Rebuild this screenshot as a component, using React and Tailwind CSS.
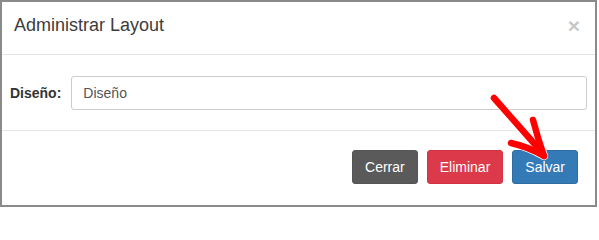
import React from 'react';

function Arrow() {
  return (
    <svg
      className="pointer-events-none absolute left-0 top-0"
      width="599"
      height="210"
      viewBox="0 0 599 210"
      fill="none"
    >
      <g stroke="#ffffff" strokeWidth="8" strokeLinecap="round" strokeLinejoin="round">
        <path d="M494 98 L539 149" />
        <path d="M511 143 Q529 147 544 156" />
        <path d="M533 120 Q538 139 544 156" />
      </g>
      <g stroke="#ff0000" strokeWidth="6.5" strokeLinecap="round" strokeLinejoin="round">
        <path d="M494 98 L539 149" />
        <path d="M511 143 Q529 147 544 156" />
        <path d="M533 120 Q538 139 544 156" />
      </g>
    </svg>
  );
}

export default function App() {
  return (
    <div className="relative h-[210px] w-[599px] bg-white font-['Liberation_Sans',Arial,sans-serif]">
      <div className="flex h-[207px] w-[597px] flex-col border-2 border-[#8a8a8a] bg-white">
        {/* header */}
        <div className="flex h-[53px] items-start justify-between border-b border-[#e5e5e5] pl-[12px] pr-[15px] pt-[11px]">
          <h4 className="text-[18px] leading-[25.7px] text-[#3c3c3c]">Administrar Layout</h4>
          <span className="mt-[2px] text-[21px] font-bold leading-[21px] text-[#c8c8c8]">×</span>
        </div>

        {/* body */}
        <div className="flex h-[75px] items-start gap-[10px] pl-[8px] pr-[8px] pt-[21px]">
          <label className="flex h-[34px] items-center text-[14px] font-bold text-[#333]">Diseño:</label>
          <input
            className="h-[34px] flex-1 rounded-[3px] border border-[#ccc] px-[11px] text-[14px] text-[#555] outline-none"
            defaultValue="Diseño"
          />
        </div>

        {/* footer */}
        <div className="flex flex-1 items-start justify-end gap-[9px] border-t border-[#e5e5e5] pr-[17px] pt-[19px]">
          <button className="h-[34px] rounded-[3px] border border-[#555] bg-[#5a5a5a] px-[12px] text-[14px] text-white">
            Cerrar
          </button>
          <button className="h-[34px] rounded-[3px] border border-[#d43344] bg-[#dc3a4b] px-[12px] text-[14px] text-white">
            Eliminar
          </button>
          <button className="h-[34px] rounded-[3px] border border-[#2e6da4] bg-[#337ab7] px-[12px] text-[14px] text-white">
            Salvar
          </button>
        </div>
      </div>
      <Arrow />
    </div>
  );
}
